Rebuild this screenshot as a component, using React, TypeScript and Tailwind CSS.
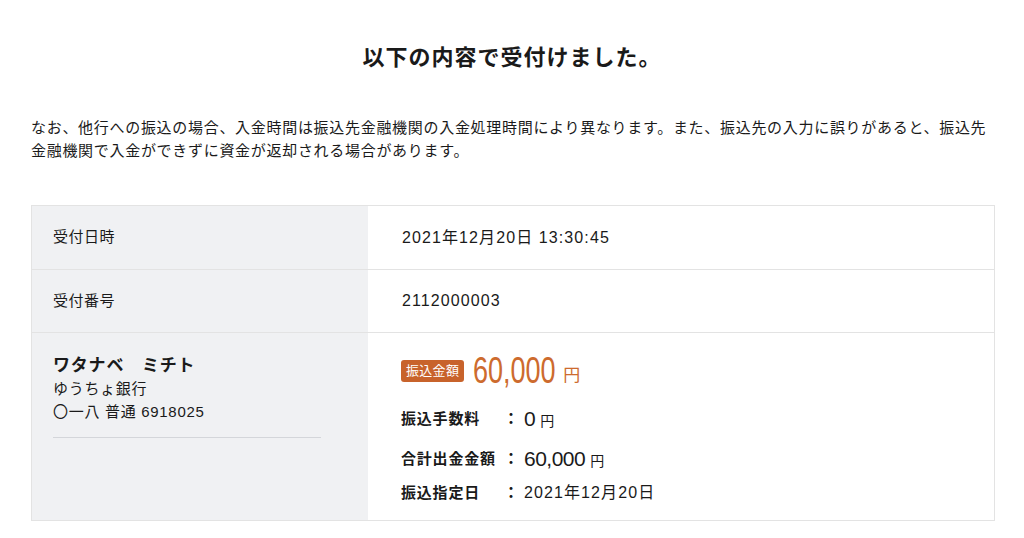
const BASE = "font-['Liberation_Sans','Noto_Sans_CJK_JP',sans-serif]";
const NUM = "font-['Liberation_Sans',sans-serif]";

const SUB_ROWS = [
  { label: "振込手数料", value: "0", yen: true, cls: "mt-[13px]" },
  { label: "合計出金金額", value: "60,000", yen: true, cls: "mt-[10px]" },
  { label: "振込指定日", value: "2021年12月20日", yen: false, cls: "mt-[4px]" },
];

export default function App() {
  return (
    <div className={`min-h-[538px] w-[1024px] bg-white text-[#1a1a1a] ${BASE}`}>
      <div className="px-[31px] pt-[40px]">
        <h1 className="text-center text-[22px] font-bold leading-[36px] tracking-[1px]">以下の内容で受付けました。</h1>
        <p className="mt-[40px] text-[15px] leading-[23px] tracking-[0.7px]">
          なお、他行への振込の場合、入金時間は振込先金融機関の入金処理時間により異なります。また、振込先の入力に誤りがあると、振込先金融機関で入金ができずに資金が返却される場合があります。
        </p>

        <div className="mt-[43px] w-[964px] border border-[#e3e3e3]">
          <div className="flex h-[64px] border-b border-[#e3e3e3]">
            <div className="flex w-[336px] items-center bg-[#f0f1f3] px-[21px] text-[15px] tracking-[0.5px]">受付日時</div>
            <div className="flex flex-1 items-center pl-[34px] text-[16px] tracking-[1.1px]">2021年12月20日 13:30:45</div>
          </div>
          <div className="flex h-[63px] border-b border-[#e3e3e3]">
            <div className="flex w-[336px] items-center bg-[#f0f1f3] px-[21px] text-[15px] tracking-[0.5px]">受付番号</div>
            <div className="flex flex-1 items-center pl-[34px] text-[16px] tracking-[1.1px]">2112000003</div>
          </div>
          <div className="flex h-[187px]">
            <div className="w-[336px] bg-[#f0f1f3] px-[21px] pt-[21px]">
              <div className="text-[17px] font-bold leading-[24px] tracking-[0.8px]">ワタナベ　ミチト</div>
              <div className="text-[15px] leading-[22px] tracking-[0.7px]">ゆうちょ銀行</div>
              <div className="text-[15px] leading-[23px] tracking-[0.7px]">〇一八 普通 6918025</div>
              <div className="mt-[14px] w-[268px] border-t border-[#d4d6da]" />
            </div>
            <div className="flex-1 pl-[33px] pt-[18px]">
              <div className="flex h-[40px] items-center">
                <span className="rounded-[3px] bg-[#c8632b] px-[5px] text-[13px] leading-[22px] tracking-[0.3px] text-white">振込金額</span>
                <span className="ml-[9px] inline-block w-[84px] overflow-visible">
                  <span className={`${NUM} inline-block origin-left scale-x-[0.73] text-[37px] leading-[40px] text-[#cd6b2e]`}>60,000</span>
                </span>
                <span className="ml-[6px] mt-[10px] text-[17px] leading-[24px] text-[#cd6b2e]">円</span>
              </div>
              {SUB_ROWS.map((r) => (
                <div key={r.label} className={`flex h-[30px] items-center ${r.cls}`}>
                  <span className="w-[102px] text-[15px] font-bold tracking-[0.8px]">{r.label}</span>
                  <span className="w-[21px] text-[16px] font-bold">：</span>
                  {r.yen ? (
                    <>
                      <span className={`${NUM} inline-block text-[21px] leading-[26px] tracking-[-0.5px]`}>{r.value}</span>
                      <span className="ml-[5px] mt-[4px] text-[14px] leading-[22px]">円</span>
                    </>
                  ) : (
                    <span className="text-[16px] tracking-[1.1px]">{r.value}</span>
                  )}
                </div>
              ))}
            </div>
          </div>
        </div>
      </div>
    </div>
  );
}
